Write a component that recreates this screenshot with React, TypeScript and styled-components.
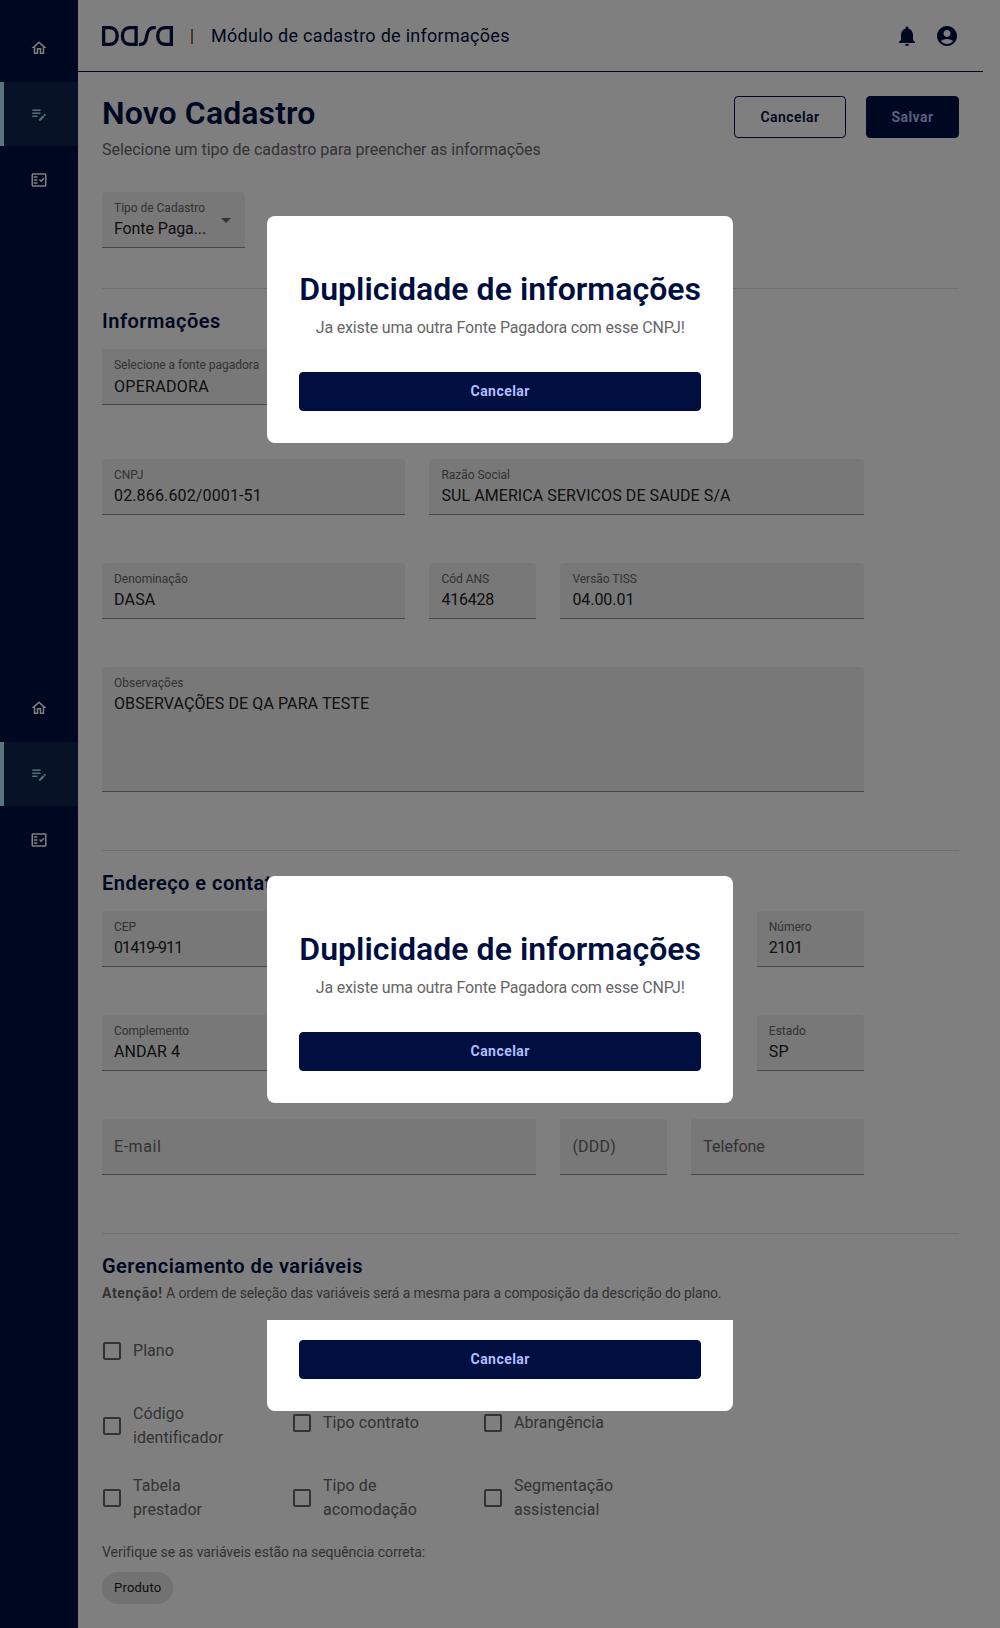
import React from 'react';
import styled, { createGlobalStyle } from 'styled-components';
import { MdOutlineHome, MdOutlineEditNote, MdOutlineFactCheck, MdNotifications } from 'react-icons/md';

const navy = '#000e40';

const GlobalStyle = createGlobalStyle`
  *, *::before, *::after { box-sizing: border-box; }
  body { margin: 0; background: #fff; font-family: Roboto, "Liberation Sans", sans-serif; font-weight: 400; }
  h1, h2, p { margin: 0; }
  button { font-family: inherit; padding: 0; }
`;

const Page = styled.div`
  position: relative;
  display: flex;
  height: 1628px;
  background: #fff;
  overflow: hidden;
`;

const Sidebar = styled.aside`
  width: 78px;
  flex: none;
  background: ${navy};
`;

const NavGroup = styled.nav`
  display: flex;
  flex-direction: column;
  gap: 2px;
  height: 660px;
  padding-top: 16px;
`;

const NavItem = styled.a<{ $active?: boolean }>`
  display: flex;
  align-items: center;
  justify-content: center;
  height: 64px;
  font-size: 18px;
  color: ${(p) => (p.$active ? '#a9dfee' : '#fff')};
  background: ${(p) => (p.$active ? '#0f254f' : 'transparent')};
  box-shadow: ${(p) => (p.$active ? 'inset 4px 0 0 #b0ebfb' : 'none')};
`;

const Main = styled.main`
  flex: 1;
  min-width: 0;
`;

const Header = styled.header`
  display: flex;
  align-items: center;
  width: 905px;
  height: 72px;
  padding: 0 24px;
  border-bottom: 1px solid ${navy};
  color: ${navy};
`;

const Divider = styled.span`
  width: 2px;
  height: 15px;
  margin: 2px 18px 0 18px;
  border-left: 1px solid #b8701c;
  border-right: 1px solid #4a8a9a;
`;

const ModuleName = styled.span`
  font-size: 18px;
  font-weight: 450;
  letter-spacing: 0.28px;
`;

const HeaderIcons = styled.div`
  display: flex;
  gap: 16px;
  margin-left: auto;
  svg { display: block; width: 24px; height: 24px; }
`;

const Content = styled.div`
  width: 905px;
  padding: 22px 24px 0;
`;

const TitleBar = styled.div`
  display: flex;
  justify-content: space-between;
  align-items: flex-start;
  height: 98px;
`;

const Title = styled.h1`
  font-size: 32px;
  line-height: 38px;
  font-weight: 600;
  letter-spacing: 0.1px;
  color: ${navy};
`;

const Subtitle = styled.p`
  margin-top: 6px;
  font-size: 16px;
  line-height: 24px;
  letter-spacing: -0.03px;
  color: #666;
`;

const Actions = styled.div`
  display: flex;
  gap: 20px;
  padding-top: 2px;
`;

const Button = styled.button<{ $filled?: boolean; $width: string; $height: string }>`
  width: ${(p) => p.$width};
  height: ${(p) => p.$height};
  border: 1px solid ${navy};
  border-radius: 4px;
  background: ${(p) => (p.$filled ? navy : 'transparent')};
  color: ${(p) => (p.$filled ? '#b1beff' : navy)};
  font-size: 14px;
  font-weight: ${(p) => (p.$filled ? 700 : 600)};
  letter-spacing: 0.46px;
`;

const TypeRow = styled.div`
  width: 143px;
  margin-bottom: 40px;
`;

const Section = styled.section<{ $height: number }>`
  height: ${(p) => p.$height}px;
  padding-top: 20px;
  border-top: 1px solid #dfdfdf;
`;

const SectionTitle = styled.h2`
  font-size: 20px;
  line-height: 24px;
  font-weight: 600;
  letter-spacing: 0.48px;
  color: ${navy};
`;

const FieldGrid = styled.div<{ $top?: number }>`
  display: grid;
  grid-template-columns: repeat(12, minmax(0, 1fr));
  column-gap: 24px;
  width: 761.8px;
  margin-top: ${(p) => p.$top ?? 48}px;
`;

const FieldBox = styled.div<{ $span?: string; $height?: number }>`
  position: relative;
  display: flex;
  flex-direction: column;
  ${(p) => p.$span && `grid-column: ${p.$span};`}
  height: ${(p) => p.$height ?? 56}px;
  padding: 8px 12px 0;
  border-radius: 4px 4px 0 0;
  border-bottom: 1px solid #8c8c8c;
  background: #f0f0f0;
  white-space: nowrap;
`;

const Label = styled.span`
  font-size: 12px;
  line-height: 16px;
  letter-spacing: -0.02px;
  color: #666;
`;

const Value = styled.span<{ $lowered?: boolean; $spacing?: number }>`
  margin-top: ${(p) => (p.$lowered ? 2 : 1)}px;
  font-size: 16px;
  line-height: 24px;
  letter-spacing: ${(p) => p.$spacing ?? 0.08}px;
  color: #212121;
`;

const Placeholder = styled.span<{ $spacing: number }>`
  margin-top: 8px;
  font-size: 16px;
  line-height: 24px;
  letter-spacing: ${(p) => p.$spacing}px;
  color: #666;
`;

const Caret = styled.span`
  position: absolute;
  right: 14px;
  top: 26px;
  border: 5px solid transparent;
  border-top-color: #666;
  border-bottom: 0;
`;

const Notice = styled.p`
  margin-top: 5px;
  font-size: 14px;
  line-height: 20px;
  letter-spacing: -0.13px;
  color: #666;
  b { font-weight: 700; letter-spacing: 0.6px; }
`;

const CheckGrid = styled.div`
  display: grid;
  grid-template-columns: 190px 191px 190px;
  grid-auto-rows: 48px;
  row-gap: 24px;
  margin-top: 26px;
`;

const CheckItem = styled.label<{ $tall?: boolean; $column?: number }>`
  display: flex;
  align-items: flex-start;
  gap: 12px;
  padding: ${(p) => (p.$tall ? '1px' : '10px')} 0 0 1px;
  grid-column: ${(p) => p.$column};
  font-size: 16px;
  line-height: 24px;
  letter-spacing: 0.06px;
  color: #666;
`;

const Box = styled.span<{ $offset: number }>`
  flex: none;
  width: 18px;
  height: 18px;
  margin-top: ${(p) => p.$offset}px;
  border: 2px solid #666;
  border-radius: 2px;
`;

const CheckText = styled.span`
  width: 110px;
`;

const Hint = styled.p`
  margin-top: 21px;
  font-size: 14px;
  line-height: 20px;
  letter-spacing: -0.05px;
  color: #666;
`;

const Chip = styled.div`
  display: flex;
  align-items: center;
  width: fit-content;
  height: 32px;
  margin-top: 10px;
  padding: 0 12px 1px;
  border-radius: 16px;
  background: #e4e4e4;
  color: #212121;
  font-size: 13px;
  letter-spacing: 0.2px;
`;

const Scrim = styled.div`
  position: absolute;
  inset: 0;
  background: rgba(0, 0, 0, 0.5);
`;

const DialogWindow = styled.div<{ $top: number; $height: number }>`
  position: absolute;
  left: 267px;
  top: ${(p) => p.$top}px;
  width: 466.4px;
  height: ${(p) => p.$height}px;
  display: flex;
`;

const DialogCard = styled.div<{ $cut?: boolean }>`
  display: flex;
  flex-direction: column;
  align-items: center;
  flex: 1;
  justify-content: flex-end;
  padding: 0 32px 32px;
  border-radius: ${(p) => (p.$cut ? '0 0 8px 8px' : '8px')};
  background: #fff;
`;

const DialogTitle = styled(Title)`
  letter-spacing: 0.05px;
  white-space: nowrap;
`;

const DialogText = styled.p`
  margin: 8px 0 32px;
  font-size: 16px;
  line-height: 24px;
  letter-spacing: -0.17px;
  color: #666;
`;

const DialogButton = styled(Button)`
  padding-bottom: 2px;
`;

const Logo = () => (
  <svg width="71" height="20" viewBox="0 0 71 20" fill="none" stroke="currentColor" strokeWidth="3.3">
    <path d="M1.65 1.65H7.6C12.7 1.65 15.2 5.2 15.2 10S12.7 18.35 7.6 18.35H1.65Z" />
    <path d="M34.1 1.65H28.2C23 1.65 20.4 5.2 20.4 10S23 18.35 28.2 18.35H34.1Z" />
    <path d="M37 18.35H38.4C42.8 18.35 44 15.2 44.7 10S47.6 1.65 52 1.65H53.8" />
    <path d="M69.35 1.65H63.4C58.3 1.65 55.7 5.2 55.7 10S58.3 18.35 63.4 18.35H69.35Z" />
  </svg>
);

const AccountIcon = () => (
  <svg viewBox="0 0 24 24" fill="currentColor">
    <path d="M12 2C6.48 2 2 6.48 2 12s4.48 10 10 10 10-4.48 10-10S17.52 2 12 2zm0 4c1.93 0 3.5 1.57 3.5 3.5S13.93 13 12 13s-3.5-1.57-3.5-3.5S10.07 6 12 6zm0 14c-2.03 0-4.43-.82-6.14-2.88C7.55 15.8 9.68 15 12 15s4.45.8 6.14 2.12C16.43 19.18 14.03 20 12 20z" />
  </svg>
);

type FieldProps = {
  label: string;
  value: string;
  span?: string;
  height?: number;
  spacing?: number;
  lowered?: boolean;
  caret?: boolean;
};

const Field = ({ label, value, span, height, spacing, lowered, caret }: FieldProps) => (
  <FieldBox $span={span} $height={height}>
    <Label>{label}</Label>
    <Value $spacing={spacing} $lowered={lowered}>{value}</Value>
    {caret && <Caret />}
  </FieldBox>
);

const EmptyField = ({ label, span, spacing }: { label: string; span: string; spacing: number }) => (
  <FieldBox $span={span}>
    <Placeholder $spacing={spacing}>{label}</Placeholder>
  </FieldBox>
);

const Check = ({ text, tall, column }: { text: string; tall?: boolean; column: number }) => (
  <CheckItem $tall={tall} $column={column}>
    <Box $offset={tall ? 15 : 3} />
    <CheckText>{text}</CheckText>
  </CheckItem>
);

const Navigation = () => (
  <NavGroup>
    <NavItem><MdOutlineHome /></NavItem>
    <NavItem $active><MdOutlineEditNote /></NavItem>
    <NavItem><MdOutlineFactCheck /></NavItem>
  </NavGroup>
);

const DuplicateDialog = ({ top }: { top: number }) => (
  <DialogWindow $top={top} $height={227}>
    <DialogCard>
      <DialogTitle>Duplicidade de informações</DialogTitle>
      <DialogText>Ja existe uma outra Fonte Pagadora com esse CNPJ!</DialogText>
      <DialogButton $filled $width="100%" $height="39px">Cancelar</DialogButton>
    </DialogCard>
  </DialogWindow>
);

const DialogFooter = () => (
  <DialogWindow $top={1320} $height={91}>
    <DialogCard $cut>
      <DialogButton $filled $width="100%" $height="39px">Cancelar</DialogButton>
    </DialogCard>
  </DialogWindow>
);

export default function App() {
  return (
    <Page>
      <GlobalStyle />
      <Sidebar>
        <Navigation />
        <Navigation />
      </Sidebar>
      <Main>
        <Header>
          <Logo />
          <Divider />
          <ModuleName>Módulo de cadastro de informações</ModuleName>
          <HeaderIcons>
            <MdNotifications />
            <AccountIcon />
          </HeaderIcons>
        </Header>
        <Content>
          <TitleBar>
            <div>
              <Title>Novo Cadastro</Title>
              <Subtitle>Selecione um tipo de cadastro para preencher as informações</Subtitle>
            </div>
            <Actions>
              <Button $width="112px" $height="42px">Cancelar</Button>
              <Button $filled $width="93px" $height="42px">Salvar</Button>
            </Actions>
          </TitleBar>
          <TypeRow>
            <Field label="Tipo de Cadastro" value="Fonte Paga..." spacing={-0.1} caret />
          </TypeRow>
          <Section $height={562}>
            <SectionTitle>Informações</SectionTitle>
            <FieldGrid $top={16}>
              <Field span="span 5" label="Selecione a fonte pagadora" value="OPERADORA" spacing={0.3} lowered />
            </FieldGrid>
            <FieldGrid $top={54}>
              <Field span="span 5" label="CNPJ" value="02.866.602/0001-51" spacing={0.14} />
              <Field span="span 7" label="Razão Social" value="SUL AMERICA SERVICOS DE SAUDE S/A" />
            </FieldGrid>
            <FieldGrid>
              <Field span="span 5" label="Denominação" value="DASA" spacing={0.2} />
              <Field span="span 2" label="Cód ANS" value="416428" spacing={-0.2} />
              <Field span="span 5" label="Versão TISS" value="04.00.01" spacing={-0.05} />
            </FieldGrid>
            <FieldGrid>
              <Field span="span 12" height={125} label="Observações" value="OBSERVAÇÕES DE QA PARA TESTE" spacing={0.1} />
            </FieldGrid>
          </Section>
          <Section $height={383}>
            <SectionTitle>Endereço e contato</SectionTitle>
            <FieldGrid $top={16}>
              <Field span="span 3" label="CEP" value="01419-911" spacing={-0.9} />
              <Field span="11 / span 2" label="Número" value="2101" spacing={-0.6} />
            </FieldGrid>
            <FieldGrid>
              <Field span="span 3" label="Complemento" value="ANDAR 4" />
              <Field span="11 / span 2" label="Estado" value="SP" />
            </FieldGrid>
            <FieldGrid>
              <EmptyField span="span 7" label="E-mail" spacing={0.55} />
              <EmptyField span="span 2" label="(DDD)" spacing={0.2} />
              <EmptyField span="span 3" label="Telefone" spacing={-0.02} />
            </FieldGrid>
          </Section>
          <Section $height={395}>
            <SectionTitle>Gerenciamento de variáveis</SectionTitle>
            <Notice>
              <b>Atenção!</b> A ordem de seleção das variáveis será a mesma para a composição da descrição do plano.
            </Notice>
            <CheckGrid>
              <Check column={1} text="Plano" />
              <Check column={1} text="Código identificador" tall />
              <Check column={2} text="Tipo contrato" />
              <Check column={3} text="Abrangência" />
              <Check column={1} text="Tabela prestador" tall />
              <Check column={2} text="Tipo de acomodação" tall />
              <Check column={3} text="Segmentação assistencial" tall />
            </CheckGrid>
            <Hint>Verifique se as variáveis estão na sequência correta:</Hint>
            <Chip>Produto</Chip>
          </Section>
        </Content>
      </Main>
      <Scrim />
      <DuplicateDialog top={216} />
      <DuplicateDialog top={876} />
      <DialogFooter />
    </Page>
  );
}
